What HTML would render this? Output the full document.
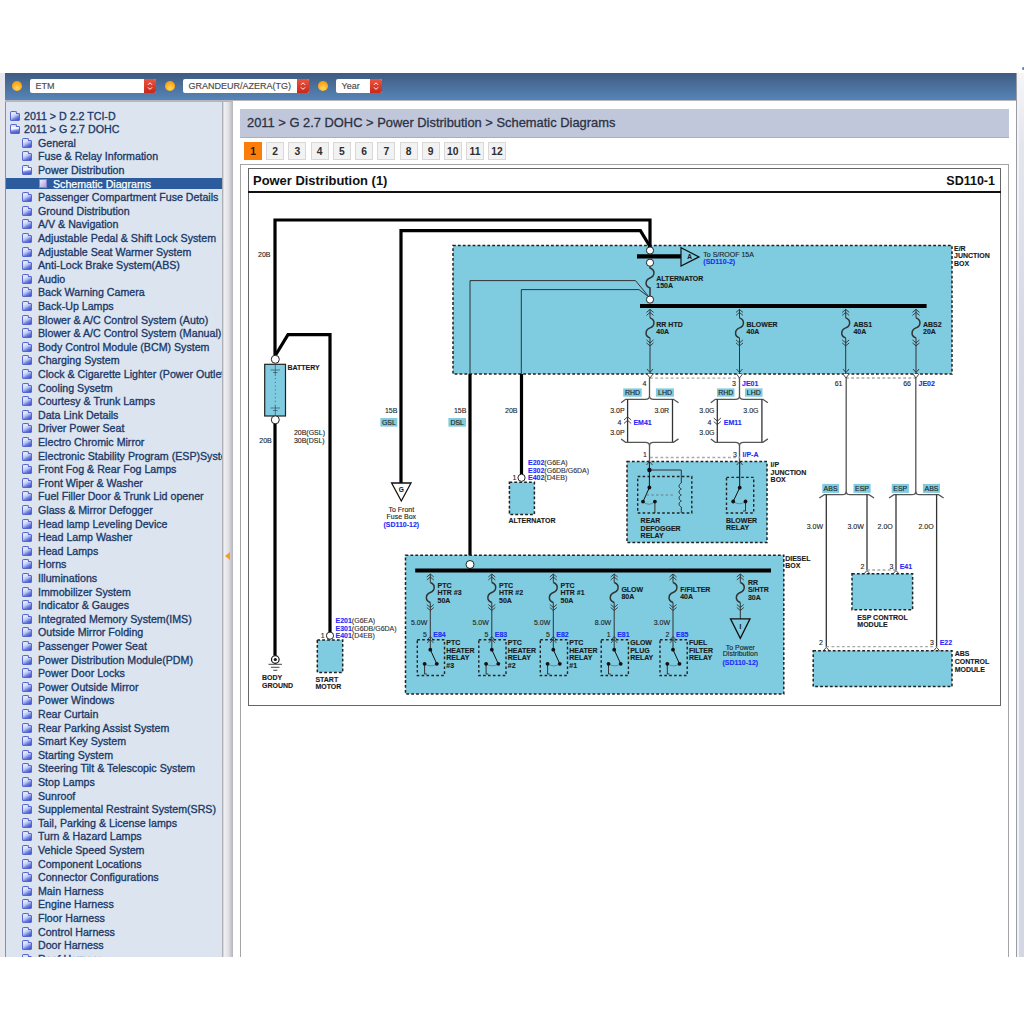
<!DOCTYPE html>
<html><head><meta charset="utf-8">
<style>
html,body{margin:0;padding:0;width:1024px;height:1024px;overflow:hidden;background:#fff;font-family:"Liberation Sans",sans-serif;}
.a{position:absolute;}
#lstrip{left:0;top:73px;width:5px;height:884px;background:#e6e7ec;}
#rstrip{left:1017px;top:73px;width:7px;height:884px;background:linear-gradient(#f6f6f8 0,#e4e6ee 8%,#d6d9e5 30%,#d3d6e3 100%);}
#rstrip2{left:1017px;top:73px;width:2px;height:884px;background:#f2f3f6;}
#bar{left:5px;top:73px;width:1011px;height:27px;background:linear-gradient(#3f5d84,#4a6d98 40%,#5585b8);border-top:1px solid #4b5a70;box-sizing:border-box;}
#barline{left:5px;top:99.5px;width:1011px;height:2px;background:#b6b6bb;}
.dot{position:absolute;width:10px;height:10px;border-radius:50%;background:radial-gradient(circle at 50% 70%,#ffd860 0,#ffb020 50%,#e88a00 100%);top:81px;}
.sel_in{position:absolute;top:79px;height:14px;background:#fff;border-radius:2px;font-size:9px;line-height:14px;color:#4a4a4a;}
.sel_in b{font-weight:normal;position:absolute;left:5.5px;top:0;-webkit-text-stroke:0.15px #4a4a4a;}
.sel_in u{position:absolute;right:0;top:0;width:12px;height:14px;background:linear-gradient(#ec5440,#c8281a);border-radius:0 2px 2px 0;text-decoration:none;}
.sel_in u svg{position:absolute;left:0;top:0;}
#left{left:5px;top:101px;width:218px;height:856px;background:#dce5ef;border-left:1px solid #8c8f96;box-sizing:border-box;overflow:hidden;}
.r{position:absolute;left:0;width:218px;height:13.6px;font-size:10.65px;line-height:13.6px;color:#1a3868;-webkit-text-stroke:0.32px #1a3868;}
.r span{position:absolute;top:0.7px;white-space:nowrap;}
.r i{position:absolute;top:3.5px;width:10px;height:8px;}
.fc,.fo{box-sizing:border-box;border:1px solid #5566cc;background:linear-gradient(150deg,#f2f4ff 0%,#b9c4f6 40%,#6d7fe0 65%,#3b4bc4 100%);border-radius:1px;}
.fc::before,.fo::before{content:"";position:absolute;left:-1px;top:-3px;width:5px;height:2px;border:1px solid #5566cc;border-bottom:none;background:#dfe5ff;border-radius:2px 2px 0 0;}
.fo{background:linear-gradient(170deg,#ffffff 0%,#eef0ff 35%,#7c8ce6 55%,#3a4ac0 100%);}
.pg{box-sizing:border-box;border:1px solid #8a86c8;background:linear-gradient(135deg,#f0ecff,#a89ee0);top:2px !important;width:8px !important;height:9px !important;}
.sel{color:#fff;-webkit-text-stroke:0.25px #fff;}
.sel::before{content:"";position:absolute;left:0;top:1px;width:218px;height:10.5px;background:#2c5c9e;}
#split{left:222px;top:101px;width:11px;height:856px;background:linear-gradient(90deg,#9da0a8 0,#b8b9c0 8%,#f0f0f3 18%,#e4e4e8 55%,#b4b5bb 100%);}
#content{left:233px;top:101px;width:783px;height:856px;background:#fff;}
#rline{left:1016px;top:73px;width:1px;height:884px;background:#9a9ca4;}
#crumb{left:240px;top:109px;width:769px;height:29px;background:#c1c7db;border-bottom:1px solid #a9aec0;box-sizing:border-box;font-size:12.9px;color:#2c3244;-webkit-text-stroke:0.3px #2c3244;line-height:18px;}
.pb{position:absolute;top:142px;width:16px;height:16px;border:1px solid #d8d8d8;background:#f2f2f2;font-size:10.3px;font-weight:bold;color:#2e2e2e;text-align:center;line-height:17px;}
.pb.on{background:#fb7d0a;border-color:#fb7d0a;color:#2a1a00;}
#outer{left:240px;top:164px;width:767px;height:792px;border:1px solid #a4a4a4;border-bottom:none;}
#ttl{left:253px;top:173px;font-size:12.95px;font-weight:bold;color:#111;line-height:16px;}
#sd{left:935px;top:173px;width:60px !important;font-size:12.5px;font-weight:bold;color:#111;line-height:16px;width:51px;text-align:right;}
#uline{left:248px;top:191px;width:753px;height:2px;background:#111;}
#sparrow{left:225px;top:551.5px;width:0;height:0;border-top:4.5px solid transparent;border-bottom:4.5px solid transparent;border-right:5.5px solid #f2a024;}
#bdot{left:1022px;top:66.5px;width:3px;height:3px;border-radius:50%;background:#5a84b4;}
#inner{left:248px;top:168px;width:751px;height:536px;border:1px solid #666;}
</style></head><body>
<div class="a" id="lstrip"></div>
<div class="a" id="rstrip"></div>
<div class="a" id="rstrip2"></div>
<div class="a" id="bar"></div>
<div class="dot" style="left:12px"></div>
<div class="sel_in" style="left:30px;width:126px"><b>ETM</b><u><svg width="12" height="14"><path d="M4,5.8 L6,3.8 L8,5.8 M4,8.4 L6,10.4 L8,8.4" stroke="#fff" stroke-width="1" fill="none"/></svg></u></div>
<div class="dot" style="left:165px"></div>
<div class="sel_in" style="left:183px;width:126px"><b>GRANDEUR/AZERA(TG)</b><u><svg width="12" height="14"><path d="M4,5.8 L6,3.8 L8,5.8 M4,8.4 L6,10.4 L8,8.4" stroke="#fff" stroke-width="1" fill="none"/></svg></u></div>
<div class="dot" style="left:318px"></div>
<div class="sel_in" style="left:336px;width:46px"><b>Year</b><u><svg width="12" height="14"><path d="M4,5.8 L6,3.8 L8,5.8 M4,8.4 L6,10.4 L8,8.4" stroke="#fff" stroke-width="1" fill="none"/></svg></u></div>
<div class="a" id="left">
<div class="r" style="top:8.0px"><i class="fc" style="left:4px"></i><span style="left:18px">2011 &gt; D 2.2 TCI-D</span></div>
<div class="r" style="top:21.6px"><i class="fo" style="left:4px"></i><span style="left:18px">2011 &gt; G 2.7 DOHC</span></div>
<div class="r" style="top:35.2px"><i class="fc" style="left:16px"></i><span style="left:32px">General</span></div>
<div class="r" style="top:48.8px"><i class="fc" style="left:16px"></i><span style="left:32px">Fuse &amp; Relay Information</span></div>
<div class="r" style="top:62.4px"><i class="fo" style="left:16px"></i><span style="left:32px">Power Distribution</span></div>
<div class="r sel" style="top:76.0px"><i class="pg" style="left:33px"></i><span style="left:47px">Schematic Diagrams</span></div>
<div class="r" style="top:89.6px"><i class="fc" style="left:16px"></i><span style="left:32px">Passenger Compartment Fuse Details</span></div>
<div class="r" style="top:103.2px"><i class="fc" style="left:16px"></i><span style="left:32px">Ground Distribution</span></div>
<div class="r" style="top:116.8px"><i class="fc" style="left:16px"></i><span style="left:32px">A/V &amp; Navigation</span></div>
<div class="r" style="top:130.4px"><i class="fc" style="left:16px"></i><span style="left:32px">Adjustable Pedal &amp; Shift Lock System</span></div>
<div class="r" style="top:144.0px"><i class="fc" style="left:16px"></i><span style="left:32px">Adjustable Seat Warmer System</span></div>
<div class="r" style="top:157.6px"><i class="fc" style="left:16px"></i><span style="left:32px">Anti-Lock Brake System(ABS)</span></div>
<div class="r" style="top:171.2px"><i class="fc" style="left:16px"></i><span style="left:32px">Audio</span></div>
<div class="r" style="top:184.8px"><i class="fc" style="left:16px"></i><span style="left:32px">Back Warning Camera</span></div>
<div class="r" style="top:198.4px"><i class="fc" style="left:16px"></i><span style="left:32px">Back-Up Lamps</span></div>
<div class="r" style="top:212.0px"><i class="fc" style="left:16px"></i><span style="left:32px">Blower &amp; A/C Control System (Auto)</span></div>
<div class="r" style="top:225.6px"><i class="fc" style="left:16px"></i><span style="left:32px">Blower &amp; A/C Control System (Manual)</span></div>
<div class="r" style="top:239.2px"><i class="fc" style="left:16px"></i><span style="left:32px">Body Control Module (BCM) System</span></div>
<div class="r" style="top:252.8px"><i class="fc" style="left:16px"></i><span style="left:32px">Charging System</span></div>
<div class="r" style="top:266.4px"><i class="fc" style="left:16px"></i><span style="left:32px">Clock &amp; Cigarette Lighter (Power Outlet)</span></div>
<div class="r" style="top:280.0px"><i class="fc" style="left:16px"></i><span style="left:32px">Cooling Sysetm</span></div>
<div class="r" style="top:293.6px"><i class="fc" style="left:16px"></i><span style="left:32px">Courtesy &amp; Trunk Lamps</span></div>
<div class="r" style="top:307.2px"><i class="fc" style="left:16px"></i><span style="left:32px">Data Link Details</span></div>
<div class="r" style="top:320.8px"><i class="fc" style="left:16px"></i><span style="left:32px">Driver Power Seat</span></div>
<div class="r" style="top:334.4px"><i class="fc" style="left:16px"></i><span style="left:32px">Electro Chromic Mirror</span></div>
<div class="r" style="top:348.0px"><i class="fc" style="left:16px"></i><span style="left:32px">Electronic Stability Program (ESP)System</span></div>
<div class="r" style="top:361.6px"><i class="fc" style="left:16px"></i><span style="left:32px">Front Fog &amp; Rear Fog Lamps</span></div>
<div class="r" style="top:375.2px"><i class="fc" style="left:16px"></i><span style="left:32px">Front Wiper &amp; Washer</span></div>
<div class="r" style="top:388.8px"><i class="fc" style="left:16px"></i><span style="left:32px">Fuel Filler Door &amp; Trunk Lid opener</span></div>
<div class="r" style="top:402.4px"><i class="fc" style="left:16px"></i><span style="left:32px">Glass &amp; Mirror Defogger</span></div>
<div class="r" style="top:416.0px"><i class="fc" style="left:16px"></i><span style="left:32px">Head lamp Leveling Device</span></div>
<div class="r" style="top:429.6px"><i class="fc" style="left:16px"></i><span style="left:32px">Head Lamp Washer</span></div>
<div class="r" style="top:443.2px"><i class="fc" style="left:16px"></i><span style="left:32px">Head Lamps</span></div>
<div class="r" style="top:456.8px"><i class="fc" style="left:16px"></i><span style="left:32px">Horns</span></div>
<div class="r" style="top:470.4px"><i class="fc" style="left:16px"></i><span style="left:32px">Illuminations</span></div>
<div class="r" style="top:484.0px"><i class="fc" style="left:16px"></i><span style="left:32px">Immobilizer System</span></div>
<div class="r" style="top:497.6px"><i class="fc" style="left:16px"></i><span style="left:32px">Indicator &amp; Gauges</span></div>
<div class="r" style="top:511.2px"><i class="fc" style="left:16px"></i><span style="left:32px">Integrated Memory System(IMS)</span></div>
<div class="r" style="top:524.8px"><i class="fc" style="left:16px"></i><span style="left:32px">Outside Mirror Folding</span></div>
<div class="r" style="top:538.4px"><i class="fc" style="left:16px"></i><span style="left:32px">Passenger Power Seat</span></div>
<div class="r" style="top:552.0px"><i class="fc" style="left:16px"></i><span style="left:32px">Power Distribution Module(PDM)</span></div>
<div class="r" style="top:565.6px"><i class="fc" style="left:16px"></i><span style="left:32px">Power Door Locks</span></div>
<div class="r" style="top:579.2px"><i class="fc" style="left:16px"></i><span style="left:32px">Power Outside Mirror</span></div>
<div class="r" style="top:592.8px"><i class="fc" style="left:16px"></i><span style="left:32px">Power Windows</span></div>
<div class="r" style="top:606.4px"><i class="fc" style="left:16px"></i><span style="left:32px">Rear Curtain</span></div>
<div class="r" style="top:620.0px"><i class="fc" style="left:16px"></i><span style="left:32px">Rear Parking Assist System</span></div>
<div class="r" style="top:633.6px"><i class="fc" style="left:16px"></i><span style="left:32px">Smart Key System</span></div>
<div class="r" style="top:647.2px"><i class="fc" style="left:16px"></i><span style="left:32px">Starting System</span></div>
<div class="r" style="top:660.8px"><i class="fc" style="left:16px"></i><span style="left:32px">Steering Tilt &amp; Telescopic System</span></div>
<div class="r" style="top:674.4px"><i class="fc" style="left:16px"></i><span style="left:32px">Stop Lamps</span></div>
<div class="r" style="top:688.0px"><i class="fc" style="left:16px"></i><span style="left:32px">Sunroof</span></div>
<div class="r" style="top:701.6px"><i class="fc" style="left:16px"></i><span style="left:32px">Supplemental Restraint System(SRS)</span></div>
<div class="r" style="top:715.2px"><i class="fc" style="left:16px"></i><span style="left:32px">Tail, Parking &amp; License lamps</span></div>
<div class="r" style="top:728.8px"><i class="fc" style="left:16px"></i><span style="left:32px">Turn &amp; Hazard Lamps</span></div>
<div class="r" style="top:742.4px"><i class="fc" style="left:16px"></i><span style="left:32px">Vehicle Speed System</span></div>
<div class="r" style="top:756.0px"><i class="fc" style="left:16px"></i><span style="left:32px">Component Locations</span></div>
<div class="r" style="top:769.6px"><i class="fc" style="left:16px"></i><span style="left:32px">Connector Configurations</span></div>
<div class="r" style="top:783.2px"><i class="fc" style="left:16px"></i><span style="left:32px">Main Harness</span></div>
<div class="r" style="top:796.8px"><i class="fc" style="left:16px"></i><span style="left:32px">Engine Harness</span></div>
<div class="r" style="top:810.4px"><i class="fc" style="left:16px"></i><span style="left:32px">Floor Harness</span></div>
<div class="r" style="top:824.0px"><i class="fc" style="left:16px"></i><span style="left:32px">Control Harness</span></div>
<div class="r" style="top:837.6px"><i class="fc" style="left:16px"></i><span style="left:32px">Door Harness</span></div>
<div class="r" style="top:851.2px"><i class="fc" style="left:16px"></i><span style="left:32px">Roof Harness</span></div></div>
<div class="a" id="split"></div>
<div class="a" id="barline"></div>
<div class="a" id="content"></div>
<div class="a" id="rline"></div>
<div class="a" id="crumb"><span class="a" style="left:7px;top:5px">2011 &gt; G 2.7 DOHC &gt; Power Distribution &gt; Schematic Diagrams</span></div>
<div class="pb on" style="left:244px">1</div>
<div class="pb" style="left:266px">2</div>
<div class="pb" style="left:288.3px">3</div>
<div class="pb" style="left:310.5px">4</div>
<div class="pb" style="left:332.8px">5</div>
<div class="pb" style="left:355px">6</div>
<div class="pb" style="left:377.3px">7</div>
<div class="pb" style="left:399.6px">8</div>
<div class="pb" style="left:421.6px">9</div>
<div class="pb" style="left:443.8px">10</div>
<div class="pb" style="left:466px">11</div>
<div class="pb" style="left:488px">12</div>
<div class="a" id="outer"></div>
<div class="a" id="inner"></div>
<div class="a" id="ttl">Power Distribution (1)</div>
<div class="a" id="sd">SD110-1</div>
<div class="a" id="uline"></div>
<div class="a" id="sparrow"></div>
<div class="a" id="bdot"></div>
<svg class="a" style="left:0;top:0" width="1024" height="1024" viewBox="0 0 1024 1024" font-family="Liberation Sans, sans-serif"><style>text{stroke:currentColor;stroke-width:0.12px;}</style>
<rect x="453.0" y="245.5" width="499.0" height="128.5" fill="#7fcbe0" stroke="#222" stroke-width="1.5" stroke-dasharray="2.8,2.1"/>
<path d="M470,374 V280.6 H635.5 L649,297" stroke="#333" stroke-width="1.0" fill="none" />
<path d="M521.3,374 V289.6 H639 L649,297" stroke="#333" stroke-width="1.0" fill="none" />
<path d="M275,356 V220 H650 V247" stroke="#000" stroke-width="3.2" fill="none" stroke-linejoin="miter"/>
<path d="M401,483 V230.6 H640.4 L650,246.5" stroke="#000" stroke-width="3.2" fill="none" stroke-linejoin="miter"/>
<path d="M275.3,355.5 L288,334.7 H330 V632" stroke="#000" stroke-width="3.2" fill="none" stroke-linejoin="miter"/>
<path d="M275,423 V655" stroke="#000" stroke-width="3.2" fill="none" stroke-linejoin="miter"/>
<path d="M470,374 V561" stroke="#000" stroke-width="3.2" fill="none" stroke-linejoin="miter"/>
<path d="M521.5,374 V474" stroke="#000" stroke-width="3.2" fill="none" stroke-linejoin="miter"/>
<path d="M637,256.4 H681" stroke="#000" stroke-width="4.2" fill="none" />
<path d="M681,247.8 L681,266 L699,256.9 Z" stroke="#111" stroke-width="1.2" fill="none" />
<text x="687.2" y="259.3" font-size="6.5" font-weight="bold" fill="#1a1a1a" color="#1a1a1a" text-anchor="start">A</text>
<circle cx="650.0" cy="250.5" r="3.6" fill="#fff" stroke="#222" stroke-width="1.0"/>
<circle cx="650.0" cy="262.7" r="3.6" fill="#fff" stroke="#222" stroke-width="1.0"/>
<path d="M650,266.3 V268 C655.5,270 655,276 650,278 C645,280 644.5,286 650,288 V296" stroke="#333" stroke-width="1.5" fill="none" />
<circle cx="650.0" cy="299.6" r="3.6" fill="#fff" stroke="#222" stroke-width="1.0"/>
<path d="M640,306 H926.6" stroke="#000" stroke-width="4.0" fill="none" />
<path d="M646.5,312.4 L650,309.4 L653.5,312.4 M646.5,315.4 L650,312.4 L653.5,315.4" stroke="#333" stroke-width="0.9" fill="none" />
<path d="M650,309.4 V317.9" stroke="#333" stroke-width="1.0" fill="none" />
<path d="M650,317.9 C655.5,319.9 655,325.9 650,327.9 C645,329.9 644.5,335.9 650,337.9" stroke="#333" stroke-width="1.5" fill="none" />
<path d="M650,337.9 V374" stroke="#333" stroke-width="1.0" fill="none" />
<path d="M646.5,339.9 L650,342.9 L653.5,339.9 M646.5,342.9 L650,345.9 L653.5,342.9" stroke="#333" stroke-width="0.9" fill="none" />
<path d="M736.0,312.4 L739.5,309.4 L743.0,312.4 M736.0,315.4 L739.5,312.4 L743.0,315.4" stroke="#333" stroke-width="0.9" fill="none" />
<path d="M739.5,309.4 V317.9" stroke="#333" stroke-width="1.0" fill="none" />
<path d="M739.5,317.9 C745.0,319.9 744.5,325.9 739.5,327.9 C734.5,329.9 734.0,335.9 739.5,337.9" stroke="#333" stroke-width="1.5" fill="none" />
<path d="M739.5,337.9 V374" stroke="#333" stroke-width="1.0" fill="none" />
<path d="M736.0,339.9 L739.5,342.9 L743.0,339.9 M736.0,342.9 L739.5,345.9 L743.0,342.9" stroke="#333" stroke-width="0.9" fill="none" />
<path d="M842.2,312.4 L845.7,309.4 L849.2,312.4 M842.2,315.4 L845.7,312.4 L849.2,315.4" stroke="#333" stroke-width="0.9" fill="none" />
<path d="M845.7,309.4 V317.9" stroke="#333" stroke-width="1.0" fill="none" />
<path d="M845.7,317.9 C851.2,319.9 850.7,325.9 845.7,327.9 C840.7,329.9 840.2,335.9 845.7,337.9" stroke="#333" stroke-width="1.5" fill="none" />
<path d="M845.7,337.9 V374" stroke="#333" stroke-width="1.0" fill="none" />
<path d="M842.2,339.9 L845.7,342.9 L849.2,339.9 M842.2,342.9 L845.7,345.9 L849.2,342.9" stroke="#333" stroke-width="0.9" fill="none" />
<path d="M912.5,312.4 L916,309.4 L919.5,312.4 M912.5,315.4 L916,312.4 L919.5,315.4" stroke="#333" stroke-width="0.9" fill="none" />
<path d="M916,309.4 V317.9" stroke="#333" stroke-width="1.0" fill="none" />
<path d="M916,317.9 C921.5,319.9 921,325.9 916,327.9 C911,329.9 910.5,335.9 916,337.9" stroke="#333" stroke-width="1.5" fill="none" />
<path d="M916,337.9 V374" stroke="#333" stroke-width="1.0" fill="none" />
<path d="M912.5,339.9 L916,342.9 L919.5,339.9 M912.5,342.9 L916,345.9 L919.5,342.9" stroke="#333" stroke-width="0.9" fill="none" />
<text x="656.3" y="281.1" font-size="7" font-weight="bold" fill="#1a1a1a" color="#1a1a1a" text-anchor="start">ALTERNATOR</text>
<text x="656.3" y="287.9" font-size="7" font-weight="bold" fill="#1a1a1a" color="#1a1a1a" text-anchor="start">150A</text>
<text x="656.3" y="326.5" font-size="7" font-weight="bold" fill="#1a1a1a" color="#1a1a1a" text-anchor="start">RR HTD</text>
<text x="656.3" y="333.5" font-size="7" font-weight="bold" fill="#1a1a1a" color="#1a1a1a" text-anchor="start">40A</text>
<text x="746.5" y="326.5" font-size="7" font-weight="bold" fill="#1a1a1a" color="#1a1a1a" text-anchor="start">BLOWER</text>
<text x="746.5" y="333.5" font-size="7" font-weight="bold" fill="#1a1a1a" color="#1a1a1a" text-anchor="start">40A</text>
<text x="853.4" y="326.5" font-size="7" font-weight="bold" fill="#1a1a1a" color="#1a1a1a" text-anchor="start">ABS1</text>
<text x="853.4" y="333.5" font-size="7" font-weight="bold" fill="#1a1a1a" color="#1a1a1a" text-anchor="start">40A</text>
<text x="923.0" y="326.5" font-size="7" font-weight="bold" fill="#1a1a1a" color="#1a1a1a" text-anchor="start">ABS2</text>
<text x="923.0" y="333.5" font-size="7" font-weight="bold" fill="#1a1a1a" color="#1a1a1a" text-anchor="start">20A</text>
<text x="703.3" y="256.5" font-size="7" font-weight="normal" fill="#222" color="#222" text-anchor="start">To S/ROOF 15A</text>
<text x="703.3" y="263.5" font-size="7" font-weight="bold" fill="#1f2cf8" color="#1f2cf8" text-anchor="start">(SD110-2)</text>
<text x="954.0" y="250.8" font-size="7" font-weight="bold" fill="#1a1a1a" color="#1a1a1a" text-anchor="start">E/R</text>
<text x="954.0" y="258.2" font-size="7" font-weight="bold" fill="#1a1a1a" color="#1a1a1a" text-anchor="start">JUNCTION</text>
<text x="954.0" y="265.8" font-size="7" font-weight="bold" fill="#1a1a1a" color="#1a1a1a" text-anchor="start">BOX</text>
<text x="258.0" y="256.5" font-size="7" font-weight="normal" fill="#242424" color="#242424" text-anchor="start">20B</text>
<rect x="264.7" y="364.3" width="20.8" height="51.7" fill="#7fcbe0" stroke="#222" stroke-width="1.2" stroke-dasharray="none"/>
<path d="M270.5,370 H280 M273,372.5 H277.5 M275.3,364.5 V376" stroke="#2a3a48" stroke-width="0.6" fill="none" />
<path d="M275.3,378 V405" stroke="#2a3a48" stroke-width="0.6" fill="none" stroke-dasharray="1.2,2.6"/>
<path d="M270.5,408 H280 M273,410.5 H277.5 M275.3,405 V416" stroke="#2a3a48" stroke-width="0.6" fill="none" />
<circle cx="275.3" cy="359.3" r="4" fill="#fff" stroke="#222" stroke-width="1.0"/>
<circle cx="275.3" cy="419.8" r="4" fill="#fff" stroke="#222" stroke-width="1.0"/>
<text x="287.4" y="369.7" font-size="7" font-weight="bold" fill="#1a1a1a" color="#1a1a1a" text-anchor="start">BATTERY</text>
<text x="259.3" y="442.5" font-size="7" font-weight="normal" fill="#242424" color="#242424" text-anchor="start">20B</text>
<text x="293.9" y="435.4" font-size="7" font-weight="normal" fill="#242424" color="#242424" text-anchor="start">20B(GSL)</text>
<text x="293.9" y="442.5" font-size="7" font-weight="normal" fill="#242424" color="#242424" text-anchor="start">30B(DSL)</text>
<text x="397.4" y="413.1" font-size="7" font-weight="normal" fill="#242424" color="#242424" text-anchor="end">15B</text>
<rect x="380.4" y="418.0" width="17.0" height="8.6" fill="#7fcbe0"/>
<text x="388.9" y="424.8" font-size="7" font-weight="normal" fill="#222" color="#222" text-anchor="middle">GSL</text>
<path d="M391.6,483 H411 L401.3,501 Z" stroke="#111" stroke-width="1.3" fill="#fff" />
<text x="401.3" y="491.6" font-size="6.5" font-weight="bold" fill="#1a1a1a" color="#1a1a1a" text-anchor="middle">G</text>
<text x="401.3" y="512.1" font-size="7" font-weight="normal" fill="#242424" color="#242424" text-anchor="middle">To Front</text>
<text x="401.3" y="518.9" font-size="7" font-weight="normal" fill="#242424" color="#242424" text-anchor="middle">Fuse Box</text>
<text x="401.3" y="527.2" font-size="7" font-weight="bold" fill="#1f2cf8" color="#1f2cf8" text-anchor="middle">(SD110-12)</text>
<text x="466.4" y="413.1" font-size="7" font-weight="normal" fill="#242424" color="#242424" text-anchor="end">15B</text>
<rect x="448.4" y="418.0" width="17.6" height="8.6" fill="#7fcbe0"/>
<text x="457.2" y="424.8" font-size="7" font-weight="normal" fill="#222" color="#222" text-anchor="middle">DSL</text>
<text x="517.5" y="413.1" font-size="7" font-weight="normal" fill="#242424" color="#242424" text-anchor="end">20B</text>
<rect x="509.4" y="482.3" width="25.0" height="32.2" fill="#7fcbe0" stroke="#222" stroke-width="1.5" stroke-dasharray="2.8,2.1"/>
<circle cx="521.5" cy="477.8" r="3.6" fill="#fff" stroke="#222" stroke-width="1.0"/>
<text x="516.3" y="480.0" font-size="7" font-weight="normal" fill="#242424" color="#242424" text-anchor="end">1</text>
<text x="528.0" y="465.3" font-size="7"><tspan font-weight="bold" fill="#1f2cf8" color="#1f2cf8">E202</tspan><tspan fill="#333" color="#333">(G6EA)</tspan></text>
<text x="528.0" y="473.1" font-size="7"><tspan font-weight="bold" fill="#1f2cf8" color="#1f2cf8">E302</tspan><tspan fill="#333" color="#333">(G6DB/G6DA)</tspan></text>
<text x="528.0" y="480.3" font-size="7"><tspan font-weight="bold" fill="#1f2cf8" color="#1f2cf8">E402</tspan><tspan fill="#333" color="#333">(D4EB)</tspan></text>
<text x="508.4" y="523.3" font-size="7" font-weight="bold" fill="#1a1a1a" color="#1a1a1a" text-anchor="start">ALTERNATOR</text>
<circle cx="275.3" cy="659.5" r="3.8" fill="#fff" stroke="#111" stroke-width="1.2"/>
<circle cx="275.3" cy="659.5" r="1.6" fill="#111"/>
<path d="M268.5,664.3 H282 M271,667.3 H279.5 M273.3,670.3 H277.3" stroke="#333" stroke-width="0.9" fill="none" />
<text x="262.0" y="680.2" font-size="7" font-weight="bold" fill="#1a1a1a" color="#1a1a1a" text-anchor="start">BODY</text>
<text x="262.0" y="688.0" font-size="7" font-weight="bold" fill="#1a1a1a" color="#1a1a1a" text-anchor="start">GROUND</text>
<rect x="317.3" y="640.0" width="25.4" height="32.4" fill="#7fcbe0" stroke="#222" stroke-width="1.5" stroke-dasharray="2.8,2.1"/>
<circle cx="330.0" cy="635.7" r="3.6" fill="#fff" stroke="#222" stroke-width="1.0"/>
<text x="324.6" y="638.2" font-size="7" font-weight="normal" fill="#242424" color="#242424" text-anchor="end">1</text>
<text x="335.5" y="622.5" font-size="7"><tspan font-weight="bold" fill="#1f2cf8" color="#1f2cf8">E201</tspan><tspan fill="#333" color="#333">(G6EA)</tspan></text>
<text x="335.5" y="630.8" font-size="7"><tspan font-weight="bold" fill="#1f2cf8" color="#1f2cf8">E301</tspan><tspan fill="#333" color="#333">(G6DB/G6DA)</tspan></text>
<text x="335.5" y="638.2" font-size="7"><tspan font-weight="bold" fill="#1f2cf8" color="#1f2cf8">E401</tspan><tspan fill="#333" color="#333">(D4EB)</tspan></text>
<text x="315.4" y="681.5" font-size="7" font-weight="bold" fill="#1a1a1a" color="#1a1a1a" text-anchor="start">START</text>
<text x="315.4" y="688.5" font-size="7" font-weight="bold" fill="#1a1a1a" color="#1a1a1a" text-anchor="start">MOTOR</text>
<path d="M650,378.2 H740" stroke="#a8a8a8" stroke-width="1.3" fill="none" stroke-dasharray="2.8,2.4"/>
<path d="M846,378 H916" stroke="#a8a8a8" stroke-width="1.3" fill="none" stroke-dasharray="2.8,2.4"/>
<path d="M647,374 L650,378 L653,374" stroke="#333" stroke-width="0.9" fill="#fff" />
<path d="M647,369 L650,372.5 L653,369" stroke="#333" stroke-width="0.9" fill="none" />
<path d="M736.5,374 L739.5,378 L742.5,374" stroke="#333" stroke-width="0.9" fill="#fff" />
<path d="M736.5,369 L739.5,372.5 L742.5,369" stroke="#333" stroke-width="0.9" fill="none" />
<path d="M843,374 L846,378 L849,374" stroke="#333" stroke-width="0.9" fill="#fff" />
<path d="M843,369 L846,372.5 L849,369" stroke="#333" stroke-width="0.9" fill="none" />
<path d="M913,374 L916,378 L919,374" stroke="#333" stroke-width="0.9" fill="#fff" />
<path d="M913,369 L916,372.5 L919,369" stroke="#333" stroke-width="0.9" fill="none" />
<text x="646.5" y="385.5" font-size="7" font-weight="normal" fill="#242424" color="#242424" text-anchor="end">4</text>
<text x="736.0" y="385.5" font-size="7" font-weight="normal" fill="#242424" color="#242424" text-anchor="end">3</text>
<text x="742.0" y="385.5" font-size="7" font-weight="bold" fill="#1f2cf8" color="#1f2cf8" text-anchor="start">JE01</text>
<text x="842.5" y="385.5" font-size="7" font-weight="normal" fill="#242424" color="#242424" text-anchor="end">61</text>
<text x="911.0" y="385.5" font-size="7" font-weight="normal" fill="#242424" color="#242424" text-anchor="end">66</text>
<text x="918.5" y="385.5" font-size="7" font-weight="bold" fill="#1f2cf8" color="#1f2cf8" text-anchor="start">JE02</text>
<path d="M649.5,378 V396.3 Q649.5,399.3 645.5,399.3 H625.6 L621.1,402.7" stroke="#555" stroke-width="1.3" fill="none" />
<path d="M649.5,396.3 Q649.5,399.3 653.5,399.3 H673.5 L678.5,402.7" stroke="#555" stroke-width="1.3" fill="none" />
<path d="M627.6,399.3 V442.3" stroke="#333" stroke-width="1.3" fill="none" />
<path d="M672.5,399.3 V442.3" stroke="#333" stroke-width="1.3" fill="none" />
<path d="M621.1,438.90000000000003 L625.6,442.3 H645.5 Q649.5,442.3 649.5,445.8 V461.5" stroke="#555" stroke-width="1.3" fill="none" />
<path d="M678.5,438.90000000000003 L673.5,442.3 H653.5 Q649.5,442.3 649.5,445.8" stroke="#555" stroke-width="1.3" fill="none" />
<rect x="623.2" y="388.4" width="18.5" height="8.3" fill="#7fcbe0"/>
<text x="632.5" y="395.1" font-size="7" font-weight="normal" fill="#222" color="#222" text-anchor="middle">RHD</text>
<rect x="655.9" y="388.4" width="18.1" height="8.3" fill="#7fcbe0"/>
<text x="665.0" y="395.1" font-size="7" font-weight="normal" fill="#222" color="#222" text-anchor="middle">LHD</text>
<text x="624.6" y="412.9" font-size="7" font-weight="normal" fill="#242424" color="#242424" text-anchor="end">3.0P</text>
<text x="654.4" y="412.9" font-size="7" font-weight="normal" fill="#242424" color="#242424" text-anchor="start">3.0R</text>
<text x="624.6" y="434.9" font-size="7" font-weight="normal" fill="#242424" color="#242424" text-anchor="end">3.0P</text>
<path d="M624,420 L627.6,416.8 L631.2,420 M624,423.5 L627.6,420.3 L631.2,423.5" stroke="#333" stroke-width="0.9" fill="none" />
<text x="621.5" y="424.6" font-size="7" font-weight="normal" fill="#242424" color="#242424" text-anchor="end">4</text>
<text x="633.4" y="424.6" font-size="7" font-weight="bold" fill="#1f2cf8" color="#1f2cf8" text-anchor="start">EM41</text>
<path d="M739.5,378 V396.3 Q739.5,399.3 735.5,399.3 H715.3 L710.8,402.7" stroke="#555" stroke-width="1.3" fill="none" />
<path d="M739.5,396.3 Q739.5,399.3 743.5,399.3 H762.9 L767.9,402.7" stroke="#555" stroke-width="1.3" fill="none" />
<path d="M717.3,399.3 V442.3" stroke="#333" stroke-width="1.3" fill="none" />
<path d="M761.9,399.3 V442.3" stroke="#333" stroke-width="1.3" fill="none" />
<path d="M710.8,438.90000000000003 L715.3,442.3 H735.5 Q739.5,442.3 739.5,445.8 V461.5" stroke="#555" stroke-width="1.3" fill="none" />
<path d="M767.9,438.90000000000003 L762.9,442.3 H743.5 Q739.5,442.3 739.5,445.8" stroke="#555" stroke-width="1.3" fill="none" />
<rect x="717.0" y="388.4" width="17.5" height="8.3" fill="#7fcbe0"/>
<text x="725.8" y="395.1" font-size="7" font-weight="normal" fill="#222" color="#222" text-anchor="middle">RHD</text>
<rect x="745.0" y="388.4" width="17.5" height="8.3" fill="#7fcbe0"/>
<text x="753.8" y="395.1" font-size="7" font-weight="normal" fill="#222" color="#222" text-anchor="middle">LHD</text>
<text x="714.5" y="412.9" font-size="7" font-weight="normal" fill="#242424" color="#242424" text-anchor="end">3.0G</text>
<text x="743.3" y="412.9" font-size="7" font-weight="normal" fill="#242424" color="#242424" text-anchor="start">3.0G</text>
<text x="714.5" y="434.9" font-size="7" font-weight="normal" fill="#242424" color="#242424" text-anchor="end">3.0G</text>
<path d="M713.7,418 L717.3,421.2 L720.9,418 M713.7,421.5 L717.3,424.7 L720.9,421.5" stroke="#333" stroke-width="0.9" fill="none" />
<text x="711.5" y="424.6" font-size="7" font-weight="normal" fill="#242424" color="#242424" text-anchor="end">4</text>
<text x="723.8" y="424.6" font-size="7" font-weight="bold" fill="#1f2cf8" color="#1f2cf8" text-anchor="start">EM11</text>
<text x="647.0" y="456.9" font-size="7" font-weight="normal" fill="#242424" color="#242424" text-anchor="end">1</text>
<text x="737.0" y="456.9" font-size="7" font-weight="normal" fill="#242424" color="#242424" text-anchor="end">3</text>
<text x="742.5" y="456.9" font-size="7" font-weight="bold" fill="#1f2cf8" color="#1f2cf8" text-anchor="start">I/P-A</text>
<path d="M650,457.5 H740" stroke="#a8a8a8" stroke-width="1.3" fill="none" stroke-dasharray="2.8,2.4"/>
<rect x="627.0" y="461.6" width="140.0" height="81.0" fill="#7fcbe0" stroke="#222" stroke-width="1.5" stroke-dasharray="2.8,2.1"/>
<path d="M646.5,465 L649.5,461.6 L652.5,465" stroke="#333" stroke-width="0.9" fill="none" />
<path d="M736.7,465 L739.7,461.6 L742.7,465" stroke="#333" stroke-width="0.9" fill="none" />
<rect x="637.7" y="476.5" width="54.1" height="36.5" fill="none" stroke="#222" stroke-width="1.4" stroke-dasharray="2.6,2.3"/>
<rect x="726.5" y="477.4" width="27.2" height="35.6" fill="none" stroke="#222" stroke-width="1.4" stroke-dasharray="2.6,2.3"/>
<path d="M649.4,461.6 V487.5 L643,501.6" stroke="#111" stroke-width="1.0" fill="none" />
<path d="M649.4,470 H681.3 V483" stroke="#333" stroke-width="1.0" fill="none" />
<path d="M681.3,483 c-3,1.5 -3,4.5 0,6 c-3,1.5 -3,4.5 0,6 c-3,1.5 -3,4.5 0,6 c-3,1.5 -3,4.5 0,6 V513" stroke="#333" stroke-width="1.0" fill="none" />
<path d="M646.5,495 H675" stroke="#777" stroke-width="1.0" fill="none" stroke-dasharray="2.4,2.4"/>
<path d="M643,501.6 Q649,507 654.9,501.6" stroke="#667" stroke-width="0.7" fill="none" />
<path d="M654.9,501.6 V513" stroke="#333" stroke-width="1.0" fill="none" />
<circle cx="649.4" cy="470.0" r="2.2" fill="#111"/>
<circle cx="649.4" cy="487.5" r="1.9" fill="#111"/>
<circle cx="643.0" cy="501.6" r="1.9" fill="#111"/>
<circle cx="654.9" cy="501.6" r="1.9" fill="#111"/>
<text x="640.6" y="522.6" font-size="7" font-weight="bold" fill="#1a1a1a" color="#1a1a1a" text-anchor="start">REAR</text>
<text x="640.6" y="530.5" font-size="7" font-weight="bold" fill="#1a1a1a" color="#1a1a1a" text-anchor="start">DEFOGGER</text>
<text x="640.6" y="537.5" font-size="7" font-weight="bold" fill="#1a1a1a" color="#1a1a1a" text-anchor="start">RELAY</text>
<path d="M739.7,461.6 V487.7 L733.2,501.5" stroke="#111" stroke-width="1.0" fill="none" />
<path d="M733.2,501.5 Q739.3,506 745.5,501.5" stroke="#667" stroke-width="0.7" fill="none" />
<path d="M745.5,501.5 V511 H743" stroke="#333" stroke-width="1.0" fill="none" />
<circle cx="739.7" cy="487.7" r="1.9" fill="#111"/>
<circle cx="733.2" cy="501.5" r="1.9" fill="#111"/>
<circle cx="745.5" cy="501.5" r="1.9" fill="#111"/>
<text x="726.0" y="523.0" font-size="7" font-weight="bold" fill="#1a1a1a" color="#1a1a1a" text-anchor="start">BLOWER</text>
<text x="726.0" y="530.2" font-size="7" font-weight="bold" fill="#1a1a1a" color="#1a1a1a" text-anchor="start">RELAY</text>
<text x="770.6" y="466.9" font-size="7" font-weight="bold" fill="#1a1a1a" color="#1a1a1a" text-anchor="start">I/P</text>
<text x="770.6" y="474.8" font-size="7" font-weight="bold" fill="#1a1a1a" color="#1a1a1a" text-anchor="start">JUNCTION</text>
<text x="770.6" y="482.0" font-size="7" font-weight="bold" fill="#1a1a1a" color="#1a1a1a" text-anchor="start">BOX</text>
<path d="M846.2,378 V491.4 Q846.2,494.6 842.2,494.6 H824.3 L819.3,498.0" stroke="#555" stroke-width="1.3" fill="none" />
<path d="M846.2,491.4 Q846.2,494.6 850.2,494.6 H869 L874,498.0" stroke="#555" stroke-width="1.3" fill="none" />
<path d="M915.8,378 V491.4 Q915.8,494.6 911.8,494.6 H894 L889,498.0" stroke="#555" stroke-width="1.3" fill="none" />
<path d="M915.8,491.4 Q915.8,494.6 919.8,494.6 H938.6 L943.6,498.0" stroke="#555" stroke-width="1.3" fill="none" />
<path d="M826.3,494.6 V647" stroke="#333" stroke-width="1.3" fill="none" />
<path d="M867,494.6 V570" stroke="#333" stroke-width="1.3" fill="none" />
<path d="M896,494.6 V570" stroke="#333" stroke-width="1.3" fill="none" />
<path d="M936.6,494.6 V647" stroke="#333" stroke-width="1.3" fill="none" />
<rect x="822.3" y="483.9" width="16.7" height="9.0" fill="#7fcbe0"/>
<text x="830.6" y="490.9" font-size="7" font-weight="normal" fill="#222" color="#222" text-anchor="middle">ABS</text>
<rect x="853.5" y="483.9" width="17.1" height="9.0" fill="#7fcbe0"/>
<text x="862.0" y="490.9" font-size="7" font-weight="normal" fill="#222" color="#222" text-anchor="middle">ESP</text>
<rect x="891.7" y="483.9" width="17.2" height="9.0" fill="#7fcbe0"/>
<text x="900.3" y="490.9" font-size="7" font-weight="normal" fill="#222" color="#222" text-anchor="middle">ESP</text>
<rect x="922.9" y="483.9" width="17.1" height="9.0" fill="#7fcbe0"/>
<text x="931.5" y="490.9" font-size="7" font-weight="normal" fill="#222" color="#222" text-anchor="middle">ABS</text>
<text x="823.0" y="528.9" font-size="7" font-weight="normal" fill="#242424" color="#242424" text-anchor="end">3.0W</text>
<text x="863.8" y="528.9" font-size="7" font-weight="normal" fill="#242424" color="#242424" text-anchor="end">3.0W</text>
<text x="892.8" y="528.9" font-size="7" font-weight="normal" fill="#242424" color="#242424" text-anchor="end">2.0O</text>
<text x="933.6" y="528.9" font-size="7" font-weight="normal" fill="#242424" color="#242424" text-anchor="end">2.0O</text>
<path d="M867,570 H896" stroke="#a8a8a8" stroke-width="1.3" fill="none" stroke-dasharray="2.8,2.4"/>
<rect x="852.0" y="573.8" width="60.6" height="35.9" fill="#7fcbe0" stroke="#222" stroke-width="1.5" stroke-dasharray="2.8,2.1"/>
<path d="M864,573.8 L867,570.5 L870,573.8" stroke="#333" stroke-width="0.9" fill="none" />
<path d="M893,573.8 L896,570.5 L899,573.8" stroke="#333" stroke-width="0.9" fill="none" />
<text x="864.5" y="568.8" font-size="7" font-weight="normal" fill="#242424" color="#242424" text-anchor="end">2</text>
<text x="893.5" y="568.8" font-size="7" font-weight="normal" fill="#242424" color="#242424" text-anchor="end">3</text>
<text x="899.7" y="568.8" font-size="7" font-weight="bold" fill="#1f2cf8" color="#1f2cf8" text-anchor="start">E41</text>
<text x="857.3" y="619.8" font-size="7" font-weight="bold" fill="#1a1a1a" color="#1a1a1a" text-anchor="start">ESP CONTROL</text>
<text x="857.3" y="626.8" font-size="7" font-weight="bold" fill="#1a1a1a" color="#1a1a1a" text-anchor="start">MODULE</text>
<path d="M826.3,646.6 H936.6" stroke="#a8a8a8" stroke-width="1.3" fill="none" stroke-dasharray="2.8,2.4"/>
<rect x="813.2" y="650.7" width="138.8" height="35.9" fill="#7fcbe0" stroke="#222" stroke-width="1.5" stroke-dasharray="2.8,2.1"/>
<path d="M823.3,650.7 L826.3,647.4 L829.3,650.7" stroke="#333" stroke-width="0.9" fill="none" />
<path d="M933.6,650.7 L936.6,647.4 L939.6,650.7" stroke="#333" stroke-width="0.9" fill="none" />
<text x="823.0" y="645.0" font-size="7" font-weight="normal" fill="#242424" color="#242424" text-anchor="end">2</text>
<text x="934.0" y="645.0" font-size="7" font-weight="normal" fill="#242424" color="#242424" text-anchor="end">3</text>
<text x="939.7" y="645.0" font-size="7" font-weight="bold" fill="#1f2cf8" color="#1f2cf8" text-anchor="start">E22</text>
<text x="954.7" y="656.3" font-size="7" font-weight="bold" fill="#1a1a1a" color="#1a1a1a" text-anchor="start">ABS</text>
<text x="954.7" y="664.3" font-size="7" font-weight="bold" fill="#1a1a1a" color="#1a1a1a" text-anchor="start">CONTROL</text>
<text x="954.7" y="671.7" font-size="7" font-weight="bold" fill="#1a1a1a" color="#1a1a1a" text-anchor="start">MODULE</text>
<rect x="405.5" y="555.2" width="378.3" height="138.8" fill="#7fcbe0" stroke="#222" stroke-width="1.5" stroke-dasharray="2.8,2.1"/>
<circle cx="470.0" cy="564.5" r="4" fill="#fff" stroke="#222" stroke-width="1.0"/>
<path d="M415.2,570.5 H771" stroke="#000" stroke-width="4.0" fill="none" />
<path d="M426.8,577.0 L430.3,574.0 L433.8,577.0 M426.8,580.0 L430.3,577.0 L433.8,580.0" stroke="#333" stroke-width="0.9" fill="none" />
<path d="M430.3,574.0 V582.5" stroke="#333" stroke-width="1.0" fill="none" />
<path d="M430.3,582.5 C435.8,584.5 435.3,590.5 430.3,592.5 C425.3,594.5 424.8,600.5 430.3,602.5" stroke="#333" stroke-width="1.5" fill="none" />
<path d="M430.3,602.5 V649.5" stroke="#333" stroke-width="1.0" fill="none" />
<path d="M426.8,604.5 L430.3,607.5 L433.8,604.5 M426.8,607.5 L430.3,610.5 L433.8,607.5" stroke="#333" stroke-width="0.9" fill="none" />
<text x="437.5" y="587.9" font-size="7" font-weight="bold" fill="#1a1a1a" color="#1a1a1a" text-anchor="start">PTC</text>
<text x="437.5" y="595.1" font-size="7" font-weight="bold" fill="#1a1a1a" color="#1a1a1a" text-anchor="start">HTR #3</text>
<text x="437.5" y="602.7" font-size="7" font-weight="bold" fill="#1a1a1a" color="#1a1a1a" text-anchor="start">50A</text>
<text x="427.3" y="625.2" font-size="7" font-weight="normal" fill="#242424" color="#242424" text-anchor="end">5.0W</text>
<text x="426.8" y="636.5" font-size="7" font-weight="normal" fill="#242424" color="#242424" text-anchor="end">5</text>
<text x="433.3" y="636.5" font-size="7" font-weight="bold" fill="#1f2cf8" color="#1f2cf8" text-anchor="start">E84</text>
<path d="M427.1,640 L430.3,636.5 L433.5,640 M427.1,643 L430.3,639.5 L433.5,643" stroke="#333" stroke-width="0.8" fill="none" />
<rect x="417.3" y="639.7" width="27.2" height="35.8" fill="none" stroke="#222" stroke-width="1.4" stroke-dasharray="2.6,2.3"/>
<path d="M430.3,649.7 L436.8,663.8" stroke="#111" stroke-width="1.0" fill="none" />
<path d="M424.6,663.8 Q430.8,668 436.8,663.8" stroke="#667" stroke-width="0.7" fill="none" />
<path d="M424.6,663.8 V674 H426.8" stroke="#333" stroke-width="1.0" fill="none" />
<circle cx="430.3" cy="649.7" r="1.9" fill="#111"/>
<circle cx="436.8" cy="663.8" r="1.9" fill="#111"/>
<circle cx="424.6" cy="663.8" r="1.9" fill="#111"/>
<text x="446.3" y="645.2" font-size="7" font-weight="bold" fill="#1a1a1a" color="#1a1a1a" text-anchor="start">PTC</text>
<text x="446.3" y="652.7" font-size="7" font-weight="bold" fill="#1a1a1a" color="#1a1a1a" text-anchor="start">HEATER</text>
<text x="446.3" y="660.1" font-size="7" font-weight="bold" fill="#1a1a1a" color="#1a1a1a" text-anchor="start">RELAY</text>
<text x="446.3" y="667.6" font-size="7" font-weight="bold" fill="#1a1a1a" color="#1a1a1a" text-anchor="start">#3</text>
<path d="M488.3,577.0 L491.8,574.0 L495.3,577.0 M488.3,580.0 L491.8,577.0 L495.3,580.0" stroke="#333" stroke-width="0.9" fill="none" />
<path d="M491.8,574.0 V582.5" stroke="#333" stroke-width="1.0" fill="none" />
<path d="M491.8,582.5 C497.3,584.5 496.8,590.5 491.8,592.5 C486.8,594.5 486.3,600.5 491.8,602.5" stroke="#333" stroke-width="1.5" fill="none" />
<path d="M491.8,602.5 V649.5" stroke="#333" stroke-width="1.0" fill="none" />
<path d="M488.3,604.5 L491.8,607.5 L495.3,604.5 M488.3,607.5 L491.8,610.5 L495.3,607.5" stroke="#333" stroke-width="0.9" fill="none" />
<text x="499.0" y="587.9" font-size="7" font-weight="bold" fill="#1a1a1a" color="#1a1a1a" text-anchor="start">PTC</text>
<text x="499.0" y="595.1" font-size="7" font-weight="bold" fill="#1a1a1a" color="#1a1a1a" text-anchor="start">HTR #2</text>
<text x="499.0" y="602.7" font-size="7" font-weight="bold" fill="#1a1a1a" color="#1a1a1a" text-anchor="start">50A</text>
<text x="488.8" y="625.2" font-size="7" font-weight="normal" fill="#242424" color="#242424" text-anchor="end">5.0W</text>
<text x="488.3" y="636.5" font-size="7" font-weight="normal" fill="#242424" color="#242424" text-anchor="end">5</text>
<text x="494.8" y="636.5" font-size="7" font-weight="bold" fill="#1f2cf8" color="#1f2cf8" text-anchor="start">E83</text>
<path d="M488.6,640 L491.8,636.5 L495.0,640 M488.6,643 L491.8,639.5 L495.0,643" stroke="#333" stroke-width="0.8" fill="none" />
<rect x="478.8" y="639.7" width="27.2" height="35.8" fill="none" stroke="#222" stroke-width="1.4" stroke-dasharray="2.6,2.3"/>
<path d="M491.8,649.7 L498.3,663.8" stroke="#111" stroke-width="1.0" fill="none" />
<path d="M486.1,663.8 Q492.3,668 498.3,663.8" stroke="#667" stroke-width="0.7" fill="none" />
<path d="M486.1,663.8 V674 H488.3" stroke="#333" stroke-width="1.0" fill="none" />
<circle cx="491.8" cy="649.7" r="1.9" fill="#111"/>
<circle cx="498.3" cy="663.8" r="1.9" fill="#111"/>
<circle cx="486.1" cy="663.8" r="1.9" fill="#111"/>
<text x="507.8" y="645.2" font-size="7" font-weight="bold" fill="#1a1a1a" color="#1a1a1a" text-anchor="start">PTC</text>
<text x="507.8" y="652.7" font-size="7" font-weight="bold" fill="#1a1a1a" color="#1a1a1a" text-anchor="start">HEATER</text>
<text x="507.8" y="660.1" font-size="7" font-weight="bold" fill="#1a1a1a" color="#1a1a1a" text-anchor="start">RELAY</text>
<text x="507.8" y="667.6" font-size="7" font-weight="bold" fill="#1a1a1a" color="#1a1a1a" text-anchor="start">#2</text>
<path d="M549.8,577.0 L553.3,574.0 L556.8,577.0 M549.8,580.0 L553.3,577.0 L556.8,580.0" stroke="#333" stroke-width="0.9" fill="none" />
<path d="M553.3,574.0 V582.5" stroke="#333" stroke-width="1.0" fill="none" />
<path d="M553.3,582.5 C558.8,584.5 558.3,590.5 553.3,592.5 C548.3,594.5 547.8,600.5 553.3,602.5" stroke="#333" stroke-width="1.5" fill="none" />
<path d="M553.3,602.5 V649.5" stroke="#333" stroke-width="1.0" fill="none" />
<path d="M549.8,604.5 L553.3,607.5 L556.8,604.5 M549.8,607.5 L553.3,610.5 L556.8,607.5" stroke="#333" stroke-width="0.9" fill="none" />
<text x="560.5" y="587.9" font-size="7" font-weight="bold" fill="#1a1a1a" color="#1a1a1a" text-anchor="start">PTC</text>
<text x="560.5" y="595.1" font-size="7" font-weight="bold" fill="#1a1a1a" color="#1a1a1a" text-anchor="start">HTR #1</text>
<text x="560.5" y="602.7" font-size="7" font-weight="bold" fill="#1a1a1a" color="#1a1a1a" text-anchor="start">50A</text>
<text x="550.3" y="625.2" font-size="7" font-weight="normal" fill="#242424" color="#242424" text-anchor="end">5.0W</text>
<text x="549.8" y="636.5" font-size="7" font-weight="normal" fill="#242424" color="#242424" text-anchor="end">5</text>
<text x="556.3" y="636.5" font-size="7" font-weight="bold" fill="#1f2cf8" color="#1f2cf8" text-anchor="start">E82</text>
<path d="M550.0999999999999,640 L553.3,636.5 L556.5,640 M550.0999999999999,643 L553.3,639.5 L556.5,643" stroke="#333" stroke-width="0.8" fill="none" />
<rect x="540.3" y="639.7" width="27.2" height="35.8" fill="none" stroke="#222" stroke-width="1.4" stroke-dasharray="2.6,2.3"/>
<path d="M553.3,649.7 L559.8,663.8" stroke="#111" stroke-width="1.0" fill="none" />
<path d="M547.5999999999999,663.8 Q553.8,668 559.8,663.8" stroke="#667" stroke-width="0.7" fill="none" />
<path d="M547.5999999999999,663.8 V674 H549.8" stroke="#333" stroke-width="1.0" fill="none" />
<circle cx="553.3" cy="649.7" r="1.9" fill="#111"/>
<circle cx="559.8" cy="663.8" r="1.9" fill="#111"/>
<circle cx="547.6" cy="663.8" r="1.9" fill="#111"/>
<text x="569.3" y="645.2" font-size="7" font-weight="bold" fill="#1a1a1a" color="#1a1a1a" text-anchor="start">PTC</text>
<text x="569.3" y="652.7" font-size="7" font-weight="bold" fill="#1a1a1a" color="#1a1a1a" text-anchor="start">HEATER</text>
<text x="569.3" y="660.1" font-size="7" font-weight="bold" fill="#1a1a1a" color="#1a1a1a" text-anchor="start">RELAY</text>
<text x="569.3" y="667.6" font-size="7" font-weight="bold" fill="#1a1a1a" color="#1a1a1a" text-anchor="start">#1</text>
<path d="M610.7,577.0 L614.2,574.0 L617.7,577.0 M610.7,580.0 L614.2,577.0 L617.7,580.0" stroke="#333" stroke-width="0.9" fill="none" />
<path d="M614.2,574.0 V582.5" stroke="#333" stroke-width="1.0" fill="none" />
<path d="M614.2,582.5 C619.7,584.5 619.2,590.5 614.2,592.5 C609.2,594.5 608.7,600.5 614.2,602.5" stroke="#333" stroke-width="1.5" fill="none" />
<path d="M614.2,602.5 V649.5" stroke="#333" stroke-width="1.0" fill="none" />
<path d="M610.7,604.5 L614.2,607.5 L617.7,604.5 M610.7,607.5 L614.2,610.5 L617.7,607.5" stroke="#333" stroke-width="0.9" fill="none" />
<text x="621.4" y="591.5" font-size="7" font-weight="bold" fill="#1a1a1a" color="#1a1a1a" text-anchor="start">GLOW</text>
<text x="621.4" y="598.8" font-size="7" font-weight="bold" fill="#1a1a1a" color="#1a1a1a" text-anchor="start">80A</text>
<text x="611.2" y="625.2" font-size="7" font-weight="normal" fill="#242424" color="#242424" text-anchor="end">8.0W</text>
<text x="610.7" y="636.5" font-size="7" font-weight="normal" fill="#242424" color="#242424" text-anchor="end">1</text>
<text x="617.2" y="636.5" font-size="7" font-weight="bold" fill="#1f2cf8" color="#1f2cf8" text-anchor="start">E81</text>
<path d="M611.0,640 L614.2,636.5 L617.4000000000001,640 M611.0,643 L614.2,639.5 L617.4000000000001,643" stroke="#333" stroke-width="0.8" fill="none" />
<rect x="601.2" y="639.7" width="27.2" height="35.8" fill="none" stroke="#222" stroke-width="1.4" stroke-dasharray="2.6,2.3"/>
<path d="M614.2,649.7 L620.7,663.8" stroke="#111" stroke-width="1.0" fill="none" />
<path d="M608.5,663.8 Q614.7,668 620.7,663.8" stroke="#667" stroke-width="0.7" fill="none" />
<path d="M608.5,663.8 V674 H610.7" stroke="#333" stroke-width="1.0" fill="none" />
<circle cx="614.2" cy="649.7" r="1.9" fill="#111"/>
<circle cx="620.7" cy="663.8" r="1.9" fill="#111"/>
<circle cx="608.5" cy="663.8" r="1.9" fill="#111"/>
<text x="630.2" y="645.2" font-size="7" font-weight="bold" fill="#1a1a1a" color="#1a1a1a" text-anchor="start">GLOW</text>
<text x="630.2" y="652.7" font-size="7" font-weight="bold" fill="#1a1a1a" color="#1a1a1a" text-anchor="start">PLUG</text>
<text x="630.2" y="660.1" font-size="7" font-weight="bold" fill="#1a1a1a" color="#1a1a1a" text-anchor="start">RELAY</text>
<path d="M669.5,577.0 L673.0,574.0 L676.5,577.0 M669.5,580.0 L673.0,577.0 L676.5,580.0" stroke="#333" stroke-width="0.9" fill="none" />
<path d="M673.0,574.0 V582.5" stroke="#333" stroke-width="1.0" fill="none" />
<path d="M673.0,582.5 C678.5,584.5 678.0,590.5 673.0,592.5 C668.0,594.5 667.5,600.5 673.0,602.5" stroke="#333" stroke-width="1.5" fill="none" />
<path d="M673.0,602.5 V649.5" stroke="#333" stroke-width="1.0" fill="none" />
<path d="M669.5,604.5 L673.0,607.5 L676.5,604.5 M669.5,607.5 L673.0,610.5 L676.5,607.5" stroke="#333" stroke-width="0.9" fill="none" />
<text x="680.2" y="591.5" font-size="7" font-weight="bold" fill="#1a1a1a" color="#1a1a1a" text-anchor="start">F/FILTER</text>
<text x="680.2" y="598.8" font-size="7" font-weight="bold" fill="#1a1a1a" color="#1a1a1a" text-anchor="start">40A</text>
<text x="670.0" y="625.2" font-size="7" font-weight="normal" fill="#242424" color="#242424" text-anchor="end">3.0W</text>
<text x="669.5" y="636.5" font-size="7" font-weight="normal" fill="#242424" color="#242424" text-anchor="end">2</text>
<text x="676.0" y="636.5" font-size="7" font-weight="bold" fill="#1f2cf8" color="#1f2cf8" text-anchor="start">E85</text>
<path d="M669.8,640 L673.0,636.5 L676.2,640 M669.8,643 L673.0,639.5 L676.2,643" stroke="#333" stroke-width="0.8" fill="none" />
<rect x="660.0" y="639.7" width="27.2" height="35.8" fill="none" stroke="#222" stroke-width="1.4" stroke-dasharray="2.6,2.3"/>
<path d="M673.0,649.7 L679.5,663.8" stroke="#111" stroke-width="1.0" fill="none" />
<path d="M667.3,663.8 Q673.5,668 679.5,663.8" stroke="#667" stroke-width="0.7" fill="none" />
<path d="M667.3,663.8 V674 H669.5" stroke="#333" stroke-width="1.0" fill="none" />
<circle cx="673.0" cy="649.7" r="1.9" fill="#111"/>
<circle cx="679.5" cy="663.8" r="1.9" fill="#111"/>
<circle cx="667.3" cy="663.8" r="1.9" fill="#111"/>
<text x="689.0" y="645.2" font-size="7" font-weight="bold" fill="#1a1a1a" color="#1a1a1a" text-anchor="start">FUEL</text>
<text x="689.0" y="652.7" font-size="7" font-weight="bold" fill="#1a1a1a" color="#1a1a1a" text-anchor="start">FILTER</text>
<text x="689.0" y="660.1" font-size="7" font-weight="bold" fill="#1a1a1a" color="#1a1a1a" text-anchor="start">RELAY</text>
<path d="M736.8,577.0 L740.3,574.0 L743.8,577.0 M736.8,580.0 L740.3,577.0 L743.8,580.0" stroke="#333" stroke-width="0.9" fill="none" />
<path d="M740.3,574.0 V582.5" stroke="#333" stroke-width="1.0" fill="none" />
<path d="M740.3,582.5 C745.8,584.5 745.3,590.5 740.3,592.5 C735.3,594.5 734.8,600.5 740.3,602.5" stroke="#333" stroke-width="1.5" fill="none" />
<path d="M740.3,602.5 V619" stroke="#333" stroke-width="1.0" fill="none" />
<path d="M736.8,604.5 L740.3,607.5 L743.8,604.5 M736.8,607.5 L740.3,610.5 L743.8,607.5" stroke="#333" stroke-width="0.9" fill="none" />
<text x="747.9" y="585.0" font-size="7" font-weight="bold" fill="#1a1a1a" color="#1a1a1a" text-anchor="start">RR</text>
<text x="747.9" y="592.1" font-size="7" font-weight="bold" fill="#1a1a1a" color="#1a1a1a" text-anchor="start">S/HTR</text>
<text x="747.9" y="599.5" font-size="7" font-weight="bold" fill="#1a1a1a" color="#1a1a1a" text-anchor="start">30A</text>
<path d="M730.5,618.8 H750 L740.3,638.3 Z" stroke="#111" stroke-width="1.3" fill="none" />
<text x="740.3" y="628.8" font-size="6.5" font-weight="bold" fill="#1a1a1a" color="#1a1a1a" text-anchor="middle">I</text>
<text x="740.3" y="649.5" font-size="7" font-weight="normal" fill="#242424" color="#242424" text-anchor="middle">To Power</text>
<text x="740.3" y="656.4" font-size="7" font-weight="normal" fill="#242424" color="#242424" text-anchor="middle">Distribution</text>
<text x="740.3" y="664.5" font-size="7" font-weight="bold" fill="#1f2cf8" color="#1f2cf8" text-anchor="middle">(SD110-12)</text>
<text x="785.2" y="560.8" font-size="7" font-weight="bold" fill="#1a1a1a" color="#1a1a1a" text-anchor="start">DIESEL</text>
<text x="785.2" y="568.0" font-size="7" font-weight="bold" fill="#1a1a1a" color="#1a1a1a" text-anchor="start">BOX</text>
</svg>
</body></html>
